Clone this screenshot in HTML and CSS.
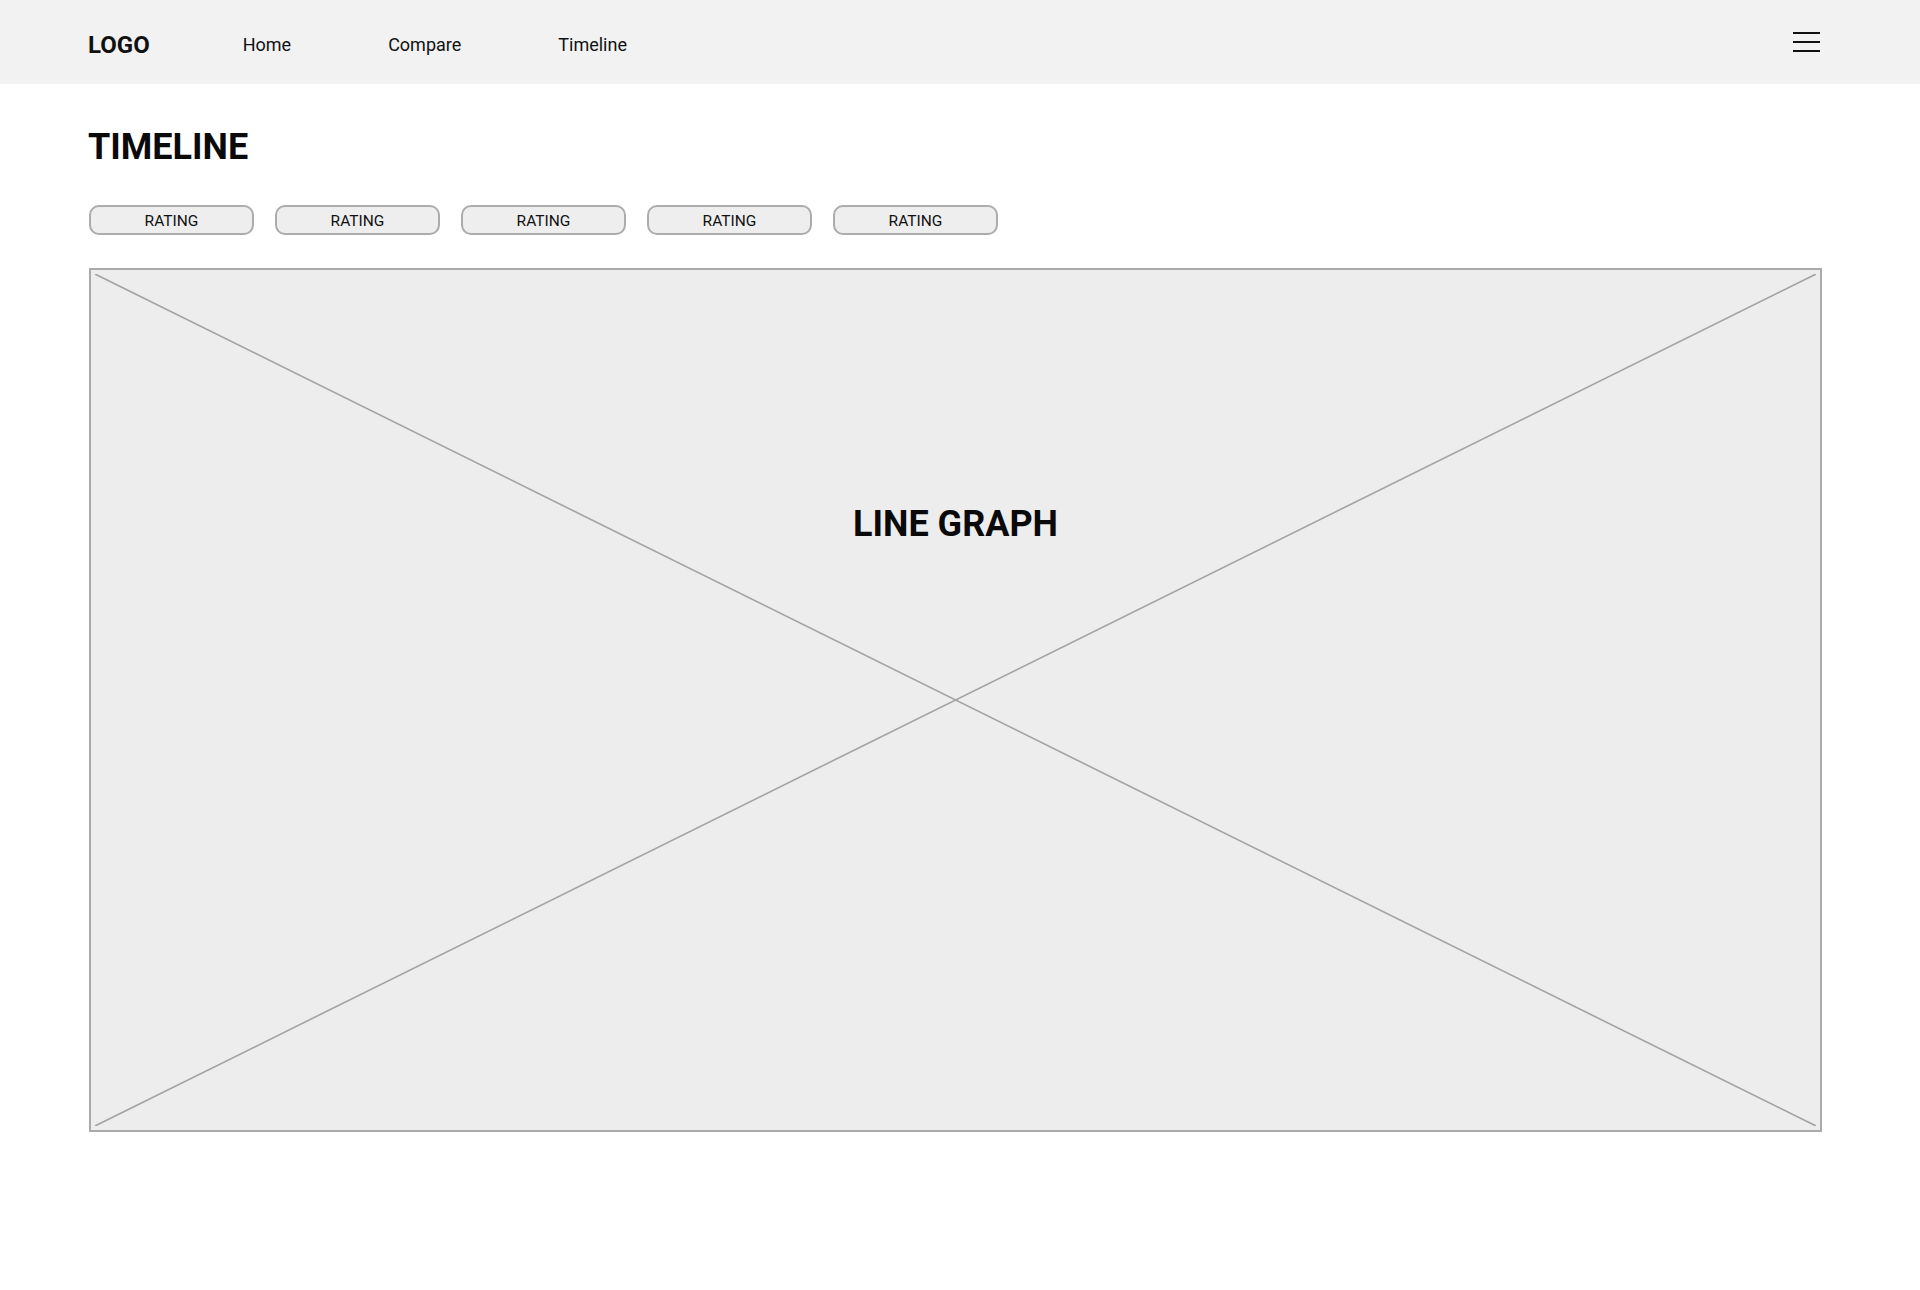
FILE: index.html
```html
<!DOCTYPE html>
<html lang="en">
<head>
<meta charset="utf-8">
<title>Timeline</title>
<link rel="stylesheet" href="styles.css">
</head>
<body>
<header class="topbar">
  <div class="logo">LOGO</div>
  <nav class="nav">
    <a class="nav-link" href="#">Home</a>
    <a class="nav-link" href="#">Compare</a>
    <a class="nav-link" href="#">Timeline</a>
  </nav>
  <button class="menu" aria-label="Menu">
    <span class="menu-bar"></span>
    <span class="menu-bar"></span>
    <span class="menu-bar"></span>
  </button>
</header>
<main class="content">
  <h1 class="title">TIMELINE</h1>
  <div class="filters">
    <button class="pill">RATING</button>
    <button class="pill">RATING</button>
    <button class="pill">RATING</button>
    <button class="pill">RATING</button>
    <button class="pill">RATING</button>
  </div>
  <section class="graph">
    <svg class="graph-x" aria-hidden="true">
      <line x1="0" y1="0" x2="100%" y2="100%"></line>
      <line x1="100%" y1="0" x2="0" y2="100%"></line>
    </svg>
    <h2 class="graph-label">LINE GRAPH</h2>
  </section>
</main>
</body>
</html>
```

FILE: styles.css
```css
* { box-sizing: border-box; }

html, body {
  margin: 0;
  padding: 0;
  background: #ffffff;
  font-family: Roboto, "Liberation Sans", Arial, sans-serif;
  color: #111111;
}

.topbar {
  height: 84px;
  background: #f2f2f2;
  display: flex;
  align-items: center;
  padding: 6px 100px 0 88px;
}

.logo {
  font-size: 24px;
  font-weight: 700;
  color: #111;
  line-height: 1;
}

.nav {
  display: flex;
  gap: 97px;
  margin-left: 93px;
}

.nav-link {
  font-size: 18px;
  color: #111;
  text-decoration: none;
  line-height: 1;
}

.menu {
  margin-left: auto;
  margin-top: -6px;
  width: 27px;
  height: 20px;
  padding: 0;
  border: 0;
  background: transparent;
  display: flex;
  flex-direction: column;
  justify-content: space-between;
}

.menu-bar {
  display: block;
  width: 27px;
  height: 2px;
  background: #111;
}

.content {
  padding: 0 98px 0 89px;
}

.title {
  margin: 42px 0 0 -1px;
  font-size: 36px;
  font-weight: 700;
  line-height: 42px;
  color: #0a0a0a;
}

.filters {
  display: flex;
  gap: 21px;
  margin-top: 37px;
}

.pill {
  width: 165px;
  height: 30px;
  border: 2px solid #acacac;
  border-radius: 10px;
  background: #eeeeee;
  font-family: Roboto, "Liberation Sans", Arial, sans-serif;
  font-size: 15.5px;
  color: #111;
  padding: 2px 0 0;
}

.graph {
  position: relative;
  margin-top: 33px;
  height: 864px;
  border: 2px solid #aaaaaa;
  background: #ededed;
  padding-top: 233px;
}

.graph-x {
  position: absolute;
  top: 4px;
  left: 4px;
  width: calc(100% - 8px);
  height: calc(100% - 8px);
}

.graph-x line {
  stroke: #a3a3a3;
  stroke-width: 1.6;
}

.graph-label {
  position: relative;
  margin: 0;
  text-align: center;
  font-size: 36px;
  font-weight: 700;
  line-height: 42px;
  color: #0a0a0a;
}
```
